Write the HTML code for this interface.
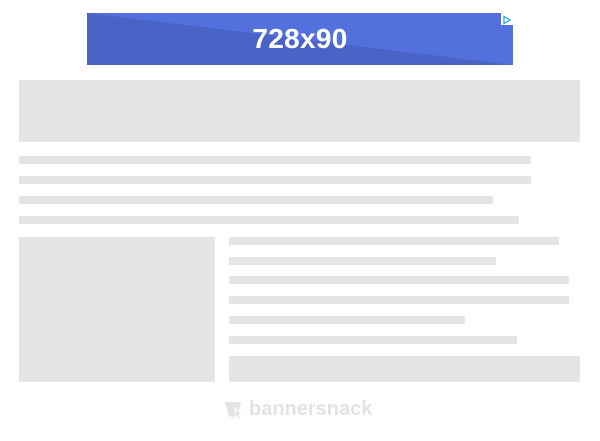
<!DOCTYPE html><html><head><style>
body{margin:0;width:600px;height:441px;background:#fff;position:relative;overflow:hidden;font-family:"Liberation Sans",sans-serif}
.g{position:absolute;background:#e5e5e5}
</style></head><body>
<div style="position:absolute;left:87px;top:13px;width:426px;height:52px;background:linear-gradient(to top right,#4a63c6 50%,#5370dd 50%);overflow:hidden">
<div style="position:absolute;width:100%;top:10px;text-align:center;color:#fff;font-weight:bold;font-size:28px;letter-spacing:0.3px">728x90</div>
<div style="position:absolute;right:0;top:0;width:12px;height:12px;background:#fff"><svg width="12" height="12"><path d="M3 2.5 L9 6 L3 9.5 Z" fill="none" stroke="#2ba3e8" stroke-width="1.3"/></svg></div>
</div>
<div class="g" style="left:19px;top:80px;width:561px;height:62px"></div>
<div class="g" style="left:19px;top:156px;width:512px;height:8px"></div>
<div class="g" style="left:19px;top:176px;width:512px;height:8px"></div>
<div class="g" style="left:19px;top:196px;width:474px;height:8px"></div>
<div class="g" style="left:19px;top:216px;width:500px;height:8px"></div>
<div class="g" style="left:19px;top:237px;width:196px;height:145px"></div>
<div class="g" style="left:229px;top:237px;width:330px;height:8px"></div>
<div class="g" style="left:229px;top:257px;width:267px;height:8px"></div>
<div class="g" style="left:229px;top:276px;width:340px;height:8px"></div>
<div class="g" style="left:229px;top:296px;width:340px;height:8px"></div>
<div class="g" style="left:229px;top:316px;width:236px;height:8px"></div>
<div class="g" style="left:229px;top:336px;width:288px;height:8px"></div>
<div class="g" style="left:229px;top:356px;width:351px;height:26px"></div>
<svg style="position:absolute;left:224px;top:401px" width="22" height="20"><path d="M1 1 H17 L15 10 L11 6 V18 L8 15 L5 16 Z" fill="#e3e3e3"/><path d="M11 7 L19 14 L15 14 L17 18 L15 19 L13 15 L11 17 Z" fill="#e3e3e3" stroke="#fff" stroke-width="1"/></svg>
<div style="position:absolute;left:249px;top:398px;color:#e3e3e3;font-weight:bold;font-size:20px;letter-spacing:0">bannersnack</div>
</body></html>
